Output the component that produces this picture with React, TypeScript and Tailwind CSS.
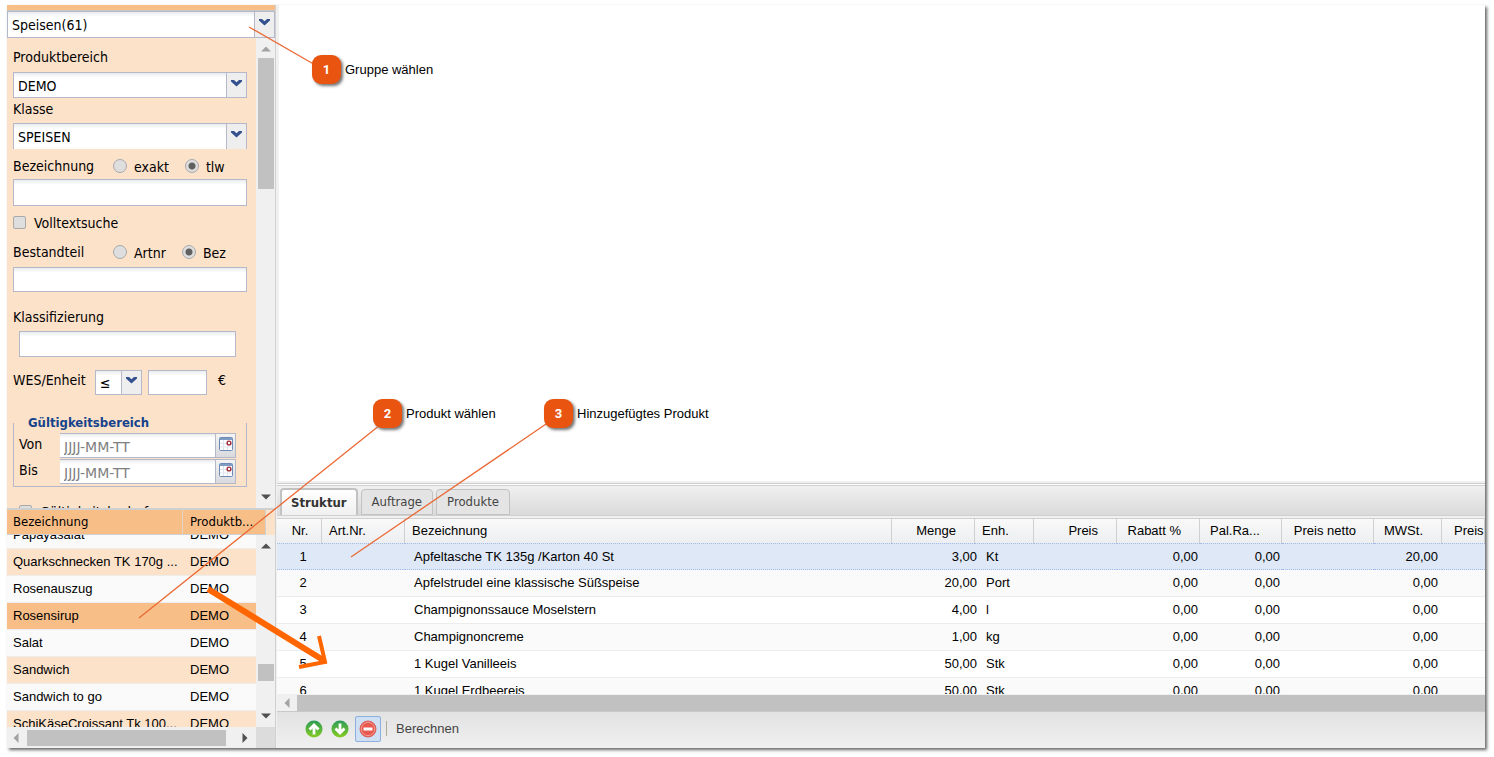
import { useState } from "react";
import type { ReactNode } from "react";

interface Product {
  id: number;
  name: string;
  area: string;
}

interface StructureRow {
  nr: number;
  name: string;
  amount: string;
  unit: string;
  vat: string;
}

const products: Product[] = [
  { id: 1, name: "Papayasalat", area: "DEMO" },
  { id: 2, name: "Quarkschnecken TK 170g ...", area: "DEMO" },
  { id: 3, name: "Rosenauszug", area: "DEMO" },
  { id: 4, name: "Rosensirup", area: "DEMO" },
  { id: 5, name: "Salat", area: "DEMO" },
  { id: 6, name: "Sandwich", area: "DEMO" },
  { id: 7, name: "Sandwich to go", area: "DEMO" },
  { id: 8, name: "SchiKäseCroissant Tk 100...", area: "DEMO" },
];

const rows: StructureRow[] = [
  { nr: 1, name: "Apfeltasche TK 135g /Karton 40 St", amount: "3,00", unit: "Kt", vat: "20,00" },
  { nr: 2, name: "Apfelstrudel eine klassische Süßspeise", amount: "20,00", unit: "Port", vat: "0,00" },
  { nr: 3, name: "Champignonssauce Moselstern", amount: "4,00", unit: "l", vat: "0,00" },
  { nr: 4, name: "Champignoncreme", amount: "1,00", unit: "kg", vat: "0,00" },
  { nr: 5, name: "1 Kugel Vanilleeis", amount: "50,00", unit: "Stk", vat: "0,00" },
  { nr: 6, name: "1 Kugel Erdbeereis", amount: "50,00", unit: "Stk", vat: "0,00" },
];

const field = "border border-[#b5b8c8] bg-linear-to-b from-[#e9ecee] to-white to-20%";

function Chevron() {
  return (
    <svg width="11" height="7" viewBox="0 0 11 7" fill="#34508f">
      <path d="M0 0h3l2.500 2.200L8 0h3v1.500L5.500 6.500 0 1.500z" />
    </svg>
  );
}

function SelectBox({ id, label, value, className, open }: { id: string; label?: string; value: string; className: string; open?: boolean }) {
  return (
    <div className={`relative flex ${field} ${className} ${open ? "border-b-0" : ""}`}>
      <select id={id} aria-label={label} className="w-full appearance-none bg-transparent pt-px pl-1 outline-none">
        <option>{value}</option>
      </select>
      <span className="pointer-events-none absolute inset-y-0 right-0 flex w-5 items-center justify-center border-l border-[#b5b8c8] bg-[#eeeeee] pb-1">
        <Chevron />
      </span>
    </div>
  );
}

function Radio({ name, label, checked, className }: { name: string; label: string; checked?: boolean; className?: string }) {
  return (
    <label className={`flex items-center gap-[7px] ${className ?? ""}`}>
      <input
        type="radio"
        name={name}
        defaultChecked={checked}
        className="size-[14px] appearance-none rounded-full border border-[#a9a9a9] bg-[#dedede] bg-[radial-gradient(circle,#606060_3px,transparent_4px)] bg-no-repeat not-checked:bg-none"
      />
      <span className="pt-[2px]">{label}</span>
    </label>
  );
}

function DateField({ id, label }: { id: string; label: string }) {
  return (
    <div className="flex h-[26px] items-start">
      <label htmlFor={id} className="w-[41px] pt-px">{label}</label>
      <input
        id={id}
        placeholder="JJJJ-MM-TT"
        className={`h-[25px] w-[156px] border-l-0 px-1 pt-[2px] font-['DejaVu_Sans',sans-serif] placeholder:text-[#808080] ${field}`}
      />
      <button type="button" aria-label={`${label} Kalender`} className="flex h-[25px] w-5 items-center justify-center border border-l-0 border-[#b5b8c8] bg-linear-to-b from-[#f4f4f4] to-[#d8dade] pb-1">
        <svg width="14" height="14" viewBox="0 0 14 14">
          <rect x=".5" y=".5" width="13" height="13" rx="1" fill="#fff" stroke="#6c8ab5" />
          <path d="M1 1h12v2H1z" fill="#7f9cc4" />
          <path d="M1 6.500h12M1 10h12M4.500 3v10M8.500 3v10" stroke="#dfe5ee" />
          <circle cx="10" cy="6" r="1.900" fill="#fff" stroke="#a02c38" strokeWidth="1.400" />
        </svg>
      </button>
    </div>
  );
}

function Arrow({ dir, color = "#505050" }: { dir: "up" | "down" | "left" | "right"; color?: string }) {
  const paths = { up: "M0 7.500 5 2.500l5 5z", down: "M0 2.500 5 7.500l5-5z", left: "M7.500 0 2.500 5l5 5z", right: "M2.500 0 7.500 5l-5 5z" };
  return (
    <svg width="10" height="10" viewBox="0 0 10 10" fill={color}>
      <path d={paths[dir]} />
    </svg>
  );
}

function MoveIcon({ down }: { down?: boolean }) {
  return (
    <svg width="18" height="18" viewBox="0 0 18 18">
      <defs>
        <linearGradient id="green" x1="0" y1="0" x2="0" y2="1">
          <stop offset="0" stopColor="#2c9c58" />
          <stop offset="1" stopColor="#86cc22" />
        </linearGradient>
      </defs>
      <circle cx="9" cy="9" r="8.500" fill="url(#green)" />
      <path d={down ? "M9 3.500v9M4.500 8.500 9 13l4.500-4.500" : "M9 14.500v-9M4.500 9.500 9 5l4.500 4.500"} fill="none" stroke="#fff" strokeWidth="2.800" />
    </svg>
  );
}

function Callout({ nr, className, children }: { nr: number; className: string; children: ReactNode }) {
  return (
    <div className={`absolute flex items-center gap-1 whitespace-nowrap ${className}`}>
      <span className="flex size-[29px] items-center justify-center rounded-[9px] bg-[#e95410] font-[Roboto,sans-serif] font-bold text-white shadow-[2px_2px_3px_#777]">
        {nr}
      </span>
      {children}
    </div>
  );
}

export default function App() {
  const [selected, setSelected] = useState(4);
  const [activeRow, setActiveRow] = useState(1);

  return (
    <div className="relative h-screen overflow-hidden bg-white pt-[5px] pr-[9px] pb-[9px] pl-[7px] font-['Liberation_Sans',sans-serif] text-[13px] text-black">
      <main className="flex h-full bg-[#f0f0f0] shadow-[2px_2px_3px_#666]">
        {/* Filter and product list */}
        <aside className="flex w-[269px] shrink-0 flex-col border-r border-[#d0d0d0]">
          <div className="h-[6px] shrink-0 border-b border-[#c8c8c8] bg-[#f8be88]" />
          <SelectBox id="group" label="Gruppe" value="Speisen(61)" className="h-[27px] shrink-0 font-['DejaVu_Sans_Condensed',sans-serif] text-sm" />
          <div className="flex min-h-0 flex-1 font-['DejaVu_Sans_Condensed',sans-serif]">
            <form className="flex min-w-0 flex-1 flex-col overflow-hidden bg-[#fde2ca] pt-[9px] pr-[9px] pl-[6px] text-sm leading-5 *:shrink-0">
              <label htmlFor="area">Produktbereich</label>
              <SelectBox id="area" value="DEMO" className="mt-[5px] h-[26px]" />
              <label htmlFor="class" className="mt-px">Klasse</label>
              <SelectBox id="class" value="SPEISEN" className="mt-1 h-[26px]" open />
              <div className="mt-[7px] flex h-5 items-center">
                <label htmlFor="name" className="w-[100px]">Bezeichnung</label>
                <Radio name="match" label="exakt" />
                <Radio name="match" label="tlw" checked className="ml-4" />
              </div>
              <input id="name" className={`mt-[3px] h-[27px] px-1 ${field}`} />
              <label className="mt-[5px] flex items-center gap-2">
                <input type="checkbox" className="size-[13px] appearance-none rounded-xs border border-[#a9a9a9] bg-[#dedede] checked:bg-[#606060]" />
                <span className="pt-[2px]">Volltextsuche</span>
              </label>
              <div className="mt-[9px] flex h-5 items-center">
                <label htmlFor="part" className="w-[100px]">Bestandteil</label>
                <Radio name="part-by" label="Artnr" />
                <Radio name="part-by" label="Bez" checked className="ml-4" />
              </div>
              <input id="part" className={`mt-[5px] h-[25px] px-1 ${field}`} />
              <label htmlFor="tags" className="mt-[15px]">Klassifizierung</label>
              <input id="tags" className={`mt-1 mr-[11px] ml-[6px] h-[26px] px-1 ${field}`} />
              <div className="mt-[13px] flex h-[25px]">
                <label htmlFor="price" className="w-[82px] whitespace-nowrap">WES/Enheit</label>
                <SelectBox id="operator" label="Vergleich" value="≤" className="w-[47px]" />
                <input id="price" className={`ml-[6px] w-[59px] px-1 ${field}`} />
                <span className="ml-[11px]">€</span>
              </div>
              <fieldset className="mt-[18px] border border-t-0 border-[#b5b8c8] pb-px pl-[5px]">
                <legend className="ml-[9px] text-[13px] leading-5 font-bold text-[#15428b]">Gültigkeitsbereich</legend>
                <DateField id="from" label="Von" />
                <DateField id="to" label="Bis" />
              </fieldset>
              <label className="mt-[13px] flex items-center gap-2 pl-[6px]">
                <input type="checkbox" className="size-[13px] appearance-none rounded-xs border border-[#a9a9a9] bg-[#dedede] checked:bg-[#606060]" />
                <span className="pt-[2px]">Gültigkeitsbedarf</span>
              </label>
            </form>
            <div className="flex w-[19px] flex-col items-center bg-[#f0f0f0] py-[6px]">
              <Arrow dir="up" color="#a3a3a3" />
              <div className="mt-1 h-[131px] w-4 bg-[#c1c1c1]" />
              <span className="mt-auto"><Arrow dir="down" /></span>
            </div>
          </div>

          <div className="shrink-0 border-t-2 border-[#d0d0d0] bg-[#fde2ca]">
            <div className="flex h-[25px] font-['DejaVu_Sans_Condensed',sans-serif] leading-6">
              <div className="flex w-[259px] border-r border-b border-[#d0d0d0] bg-[#f8be88]">
                <span className="w-[176px] border-r border-[#e5d5c5] pl-[6px]">Bezeichnung</span>
                <span className="pl-[7px]">Produktb...</span>
              </div>
            </div>
            <div className="flex h-[192px] overflow-hidden">
              <div className="min-w-0 flex-1">
                <table className="-mt-[13px] w-full table-fixed border-separate border-spacing-0">
                  <colgroup>
                    <col className="w-[177px]" />
                    <col />
                  </colgroup>
                  <tbody>
                    {products.map((p, i) => (
                      <tr
                        key={p.id}
                        onClick={() => setSelected(p.id)}
                        className={p.id === selected ? "bg-[#f8be88]" : i % 4 === 1 || p.id === 8 ? "bg-[#fde2ca]" : "bg-[#fafafa]"}
                      >
                        <td className="h-[27px] border-b border-[#ededed] pl-[6px] whitespace-nowrap">{p.name}</td>
                        <td className="border-b border-[#ededed] pl-[6px]">{p.area}</td>
                      </tr>
                    ))}
                  </tbody>
                </table>
              </div>
              <div className="flex w-[19px] flex-col items-center bg-[#f0f0f0] py-[6px]">
                <Arrow dir="up" />
                <div className="mt-auto mb-[30px] h-[17px] w-4 bg-[#c1c1c1]" />
                <Arrow dir="down" />
              </div>
            </div>
            <div className="flex h-[21px] items-center bg-[#f0f0f0] pl-1">
              <Arrow dir="left" color="#a3a3a3" />
              <div className="ml-[6px] h-4 flex-1 bg-[#c1c1c1]" />
              <span className="mr-[6px] ml-[14px]"><Arrow dir="right" /></span>
              <div className="h-full w-[19px] bg-[#dcdcdc]" />
            </div>
          </div>
        </aside>

        {/* Workspace with the structure grid below */}
        <section className="ml-px flex min-w-0 flex-1 flex-col">
          <div className="ml-[2px] flex-1 bg-white" />
          <div className="mt-[2px] h-[2px] border-b border-white bg-[#cccccc]" />
          <div role="tablist" className="flex h-[31px] items-end gap-[3px] border-t border-b border-[#d0d0d0] bg-linear-to-b from-[#f0f0f0] to-[#dadada] px-[3px] font-['DejaVu_Sans_Condensed',sans-serif] text-[#444]">
            <button role="tab" aria-selected="true" className="h-[27px] rounded-t-sm border-2 border-b-0 border-[#c2c2c2] bg-linear-to-b from-white to-[#f0f0f0] px-[9px] font-bold text-[#333]">
              Struktur
            </button>
            <button role="tab" aria-selected="false" className="h-[26px] rounded-t-sm border border-[#c2c2c2] bg-[#e4e4e4] px-[10px]">Auftrage</button>
            <button role="tab" aria-selected="false" className="h-[26px] rounded-t-sm border border-[#c2c2c2] bg-[#e4e4e4] px-[10px]">Produkte</button>
          </div>
          <div className="mt-[2px] h-[176px] overflow-hidden bg-white">
            <table className="w-full table-fixed border-separate border-spacing-0 whitespace-nowrap">
              <colgroup>
                <col className="w-[45px]" />
                <col className="w-[83px]" />
                <col />
                <col className="w-[83px]" />
                <col className="w-[59px]" />
                <col className="w-[83px]" />
                <col className="w-[83px]" />
                <col className="w-[82px]" />
                <col className="w-[92px]" />
                <col className="w-[68px]" />
                <col className="w-[43px]" />
              </colgroup>
              <thead className="bg-linear-to-b from-[#fafafa] to-[#eceef0] text-left *:*:border-t *:*:border-r *:*:border-[#d0d0d0] *:*:font-normal">
                <tr>
                  <th className="h-[25px] pl-[2px] text-center">Nr.</th>
                  <th className="pl-[7px]">Art.Nr.</th>
                  <th className="pl-[7px]">Bezeichnung</th>
                  <th className="pr-[18px] text-right">Menge</th>
                  <th className="pl-[7px]">Enh.</th>
                  <th className="pr-[18px] text-right">Preis</th>
                  <th className="pr-[18px] text-right">Rabatt %</th>
                  <th className="pl-[10px]">Pal.Ra...</th>
                  <th className="pr-[17px] text-right">Preis netto</th>
                  <th className="pl-[10px]">MWSt.</th>
                  <th className="pl-[12px]">Preis</th>
                </tr>
              </thead>
              <tbody>
                {rows.map((r, i) => (
                  <tr
                    key={r.nr}
                    onClick={() => setActiveRow(r.nr)}
                    className={
                      r.nr === activeRow
                        ? "bg-[#dfe8f6] *:border-y *:border-dotted *:border-[#a3bae9]"
                        : `*:border-b *:border-[#ededed] ${i % 2 ? "bg-[#fafafa]" : "bg-white"}`
                    }
                  >
                    <td className="h-[27px] pl-[7px] text-center">{r.nr}</td>
                    <td />
                    <td className="pl-[9px]">{r.name}</td>
                    <td className="text-right"><span className="-mr-[2px]">{r.amount}</span></td>
                    <td className="pl-[11px]">{r.unit}</td>
                    <td />
                    <td className="pr-[2px] text-right">0,00</td>
                    <td className="pr-[2px] text-right">0,00</td>
                    <td />
                    <td className="pr-[4px] text-right">{r.vat}</td>
                    <td />
                  </tr>
                ))}
              </tbody>
            </table>
          </div>
          <div className="flex h-[17px] items-center pt-px pl-[5px]">
            <Arrow dir="left" color="#a3a3a3" />
            <div className="ml-[5px] h-4 flex-1 bg-[#c1c1c1]" />
          </div>
          <div className="flex h-[37px] items-center border-t border-[#c8c8c8] bg-linear-to-b from-[#e2e2e2] to-[#f0f0f0] pb-[3px] pl-[28px] text-[#444]">
            <button aria-label="Nach oben"><MoveIcon /></button>
            <button aria-label="Nach unten" className="ml-2"><MoveIcon down /></button>
            <button aria-label="Entfernen" className="ml-[6px] flex size-[26px] items-center justify-center rounded-xs border border-[#8db0dc] bg-[#cfe0f5]">
              <svg width="18" height="18" viewBox="0 0 18 18">
                <circle cx="9" cy="9" r="8" fill="#e85a50" stroke="#d9605a" />
                <circle cx="9" cy="9" r="6.700" fill="none" stroke="#f29b90" />
                <path d="M4.500 7.500h9v3h-9z" fill="#fff" />
              </svg>
            </button>
            <div className="mx-[5px] h-[15px] w-px bg-[#b0aa98]" />
            <button className="px-1">Berechnen</button>
          </div>
        </section>
      </main>

      {/* Callouts over the panels */}
      <svg className="pointer-events-none absolute inset-0 size-full" fill="none">
        <path d="M249 27l68 39M139 618l241-193M351 557l198-135" stroke="#ea6a35" strokeWidth="1.300" />
        <path d="M208 589l115 71" stroke="#ff6600" strokeWidth="6" />
        <path d="M319 636l6 26-26 5" stroke="#ff6600" strokeWidth="4" />
      </svg>
      <Callout nr={1} className="top-[55px] left-[312px]">Gruppe wählen</Callout>
      <Callout nr={2} className="top-[399px] left-[373px]">Produkt wählen</Callout>
      <Callout nr={3} className="top-[399px] left-[544px]">Hinzugefügtes Produkt</Callout>
    </div>
  );
}
